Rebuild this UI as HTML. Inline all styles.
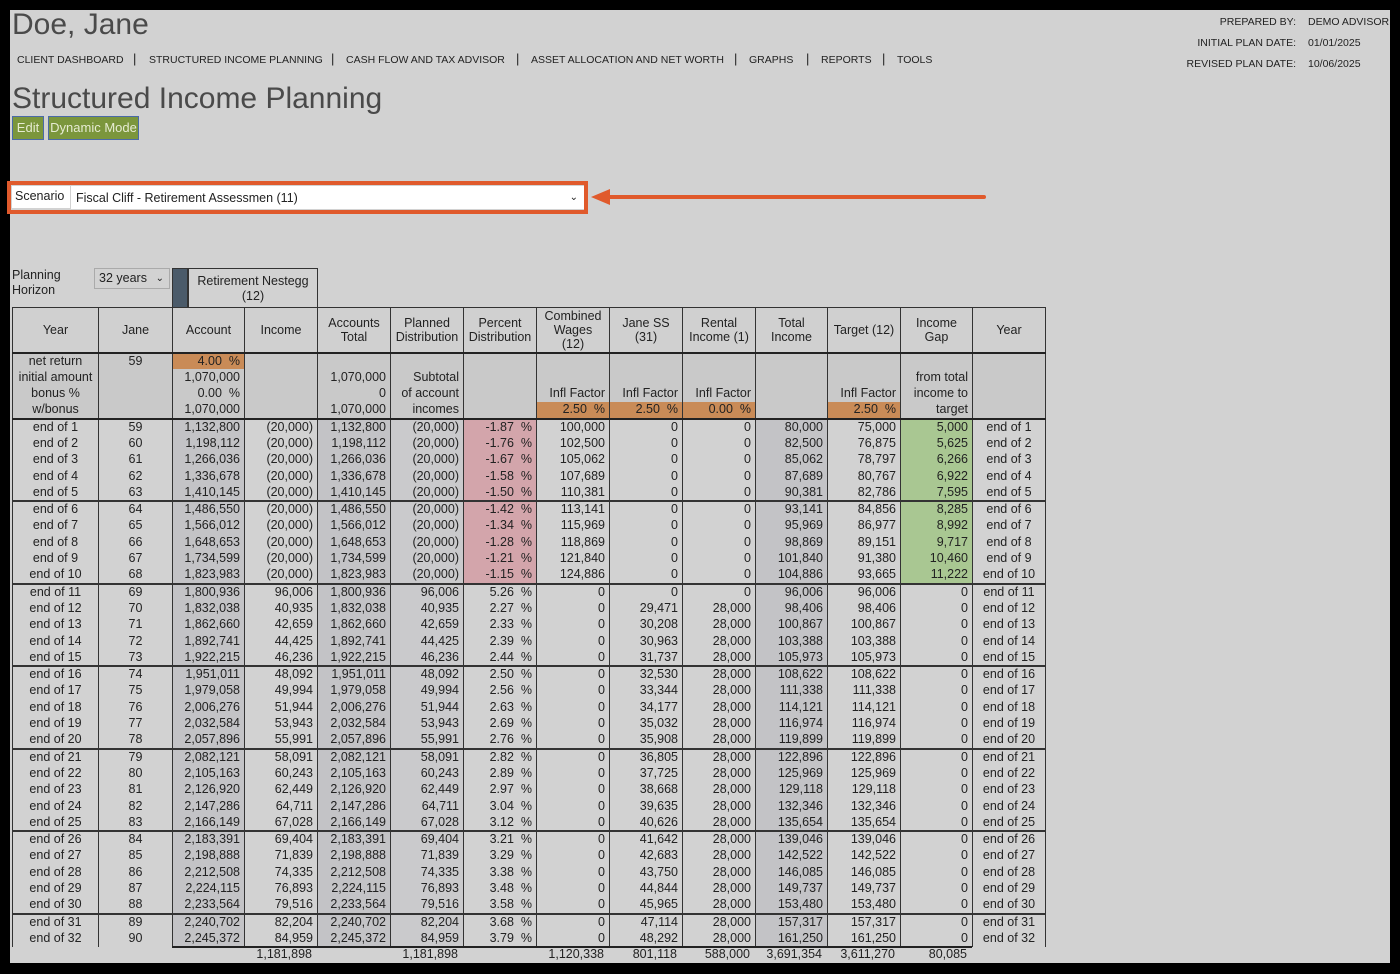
<!DOCTYPE html>
<html><head><meta charset="utf-8"><style>
*{margin:0;padding:0;box-sizing:border-box}
body{width:1400px;height:974px;background:#000;position:relative;overflow:hidden;font-family:"Liberation Sans",sans-serif;color:#222}
#pg{position:absolute;left:10px;top:10px;width:1380px;height:953px;background:#d2d2d2}
.a{position:absolute;white-space:nowrap}
.nav{font-size:10.5px;color:#222;top:54px}
.sep{font-size:13px;top:51px;color:#222}
.r{font-size:10.5px;color:#222}
.btn{position:absolute;top:116px;height:24px;background:#7b963c;border:1px solid #4a6aa8;color:#e6ebd2;font-size:13px;line-height:22px;text-align:center}
table{position:absolute;left:12px;top:307px;border-collapse:collapse;table-layout:fixed;font-size:12.5px}
td{border-left:1px solid #333;border-right:1px solid #333;padding:0 4px;text-align:right;height:16.5px;line-height:15px;white-space:nowrap;overflow:hidden}
td:first-child,td:nth-child(2),td:last-child{text-align:center}
tr.h td{height:45px;text-align:center;border:1px solid #333;border-bottom:2px solid #222;line-height:14px;background:#d0d0d0}
tr.t td{background:#c9c9c9}
tr.tb td{border-bottom:2px solid #222}
tr.g td{border-top:2px solid #333}
td.s{background:#c3c3c6}
td.s2{background:#cacacc}
td.o{background:#c98b57!important}
td.p{background:#d3a5ab}
td.gr{background:#a9c792}
</style></head><body><div id="pg"></div>
<div class="a" style="left:12px;top:8px;font-size:30px;color:#4a4a4a">Doe, Jane</div>
<div class="a nav" style="left:17px">CLIENT DASHBOARD</div><div class="a sep" style="left:133px">|</div>
<div class="a nav" style="left:149px">STRUCTURED INCOME PLANNING</div><div class="a sep" style="left:331px">|</div>
<div class="a nav" style="left:346px">CASH FLOW AND TAX ADVISOR</div><div class="a sep" style="left:516px">|</div>
<div class="a nav" style="left:531px">ASSET ALLOCATION AND NET WORTH</div><div class="a sep" style="left:734px">|</div>
<div class="a nav" style="left:749px">GRAPHS</div><div class="a sep" style="left:806px">|</div>
<div class="a nav" style="left:821px">REPORTS</div><div class="a sep" style="left:882px">|</div>
<div class="a nav" style="left:897px">TOOLS</div>
<div class="a r" style="right:104px;top:16px;text-align:right">PREPARED BY:</div><div class="a r" style="left:1308px;top:16px">DEMO ADVISOR</div>
<div class="a r" style="right:104px;top:37px;text-align:right">INITIAL PLAN DATE:</div><div class="a r" style="left:1308px;top:37px">01/01/2025</div>
<div class="a r" style="right:104px;top:58px;text-align:right">REVISED PLAN DATE:</div><div class="a r" style="left:1308px;top:58px">10/06/2025</div>
<div class="a" style="left:12px;top:82px;font-size:30px;color:#4a4a4a">Structured Income Planning</div>
<div class="btn" style="left:12px;width:32px">Edit</div>
<div class="btn" style="left:48px;width:91px">Dynamic Mode</div>
<div class="a" style="left:7px;top:181px;width:581px;height:33px;border:4px solid #e05a2c"></div>
<div class="a" style="left:12px;top:186px;width:58px;height:22px;background:#fff;font-size:12.5px;line-height:20px;padding-left:3px">Scenario</div>
<div class="a" style="left:71px;top:186px;width:513px;height:23px;background:#fff;font-size:12.5px;line-height:24px;padding-left:5px">Fiscal Cliff - Retirement Assessmen (11)<span style="position:absolute;right:6px;top:0;font-size:10px">&#8964;</span></div>
<svg class="a" style="left:588px;top:185px" width="402" height="26"><line x1="18" y1="12" x2="396" y2="12" stroke="#e05a2c" stroke-width="4" stroke-linecap="round"/><polygon points="3,12 22,4 22,20" fill="#e05a2c"/></svg>
<div class="a" style="left:12px;top:268px;font-size:12.5px;line-height:15px">Planning<br>Horizon</div>
<div class="a" style="left:94px;top:268px;width:76px;height:21px;border:1px solid #aaa;font-size:12.5px;line-height:19px;padding-left:4px">32 years<span style="position:absolute;right:5px;font-size:10px">&#8964;</span></div>
<div class="a" style="left:172px;top:268px;width:16px;height:40px;background:#4b5b6a;border:1px solid #333"></div>
<div class="a" style="left:188px;top:268px;width:130px;height:40px;border:1px solid #333;font-size:12.5px;line-height:15px;text-align:center;padding-top:5px">Retirement Nestegg<br>(12)</div>
<table>
<colgroup><col style="width:86px"><col style="width:74px"><col style="width:72px"><col style="width:73px"><col style="width:73px"><col style="width:73px"><col style="width:73px"><col style="width:73px"><col style="width:73px"><col style="width:73px"><col style="width:72px"><col style="width:73px"><col style="width:72px"><col style="width:73px"></colgroup>
<tr class="h"><td>Year<td>Jane<td>Account<td>Income<td>Accounts<br>Total<td>Planned<br>Distribution<td>Percent<br>Distribution<td>Combined<br>Wages<br>(12)<td>Jane SS<br>(31)<td>Rental<br>Income (1)<td>Total<br>Income<td>Target (12)<td>Income<br>Gap<td>Year</tr>
<tr class="t"><td>net return<td>59<td class="o">4.00 &nbsp;%<td><td><td><td><td><td><td><td><td><td><td></tr>
<tr class="t"><td>initial amount<td><td>1,070,000<td><td>1,070,000<td>Subtotal<td><td><td><td><td><td><td>from total<td></tr>
<tr class="t"><td>bonus %<td><td>0.00 &nbsp;%<td><td>0<td>of account<td><td>Infl Factor<td>Infl Factor<td>Infl Factor<td><td>Infl Factor<td>income to<td></tr>
<tr class="t tb"><td>w/bonus<td><td>1,070,000<td><td>1,070,000<td>incomes<td><td class="o">2.50 &nbsp;%<td class="o">2.50 &nbsp;%<td class="o">0.00 &nbsp;%<td><td class="o">2.50 &nbsp;%<td>target<td></tr>
<tr><td>end of 1<td>59<td class=s>1,132,800<td>(20,000)<td class=s>1,132,800<td class=s2>(20,000)<td class=p>-1.87 &nbsp;%<td>100,000<td>0<td>0<td class=s>80,000<td>75,000<td class=gr>5,000<td>end of 1</tr>
<tr><td>end of 2<td>60<td class=s>1,198,112<td>(20,000)<td class=s>1,198,112<td class=s2>(20,000)<td class=p>-1.76 &nbsp;%<td>102,500<td>0<td>0<td class=s>82,500<td>76,875<td class=gr>5,625<td>end of 2</tr>
<tr><td>end of 3<td>61<td class=s>1,266,036<td>(20,000)<td class=s>1,266,036<td class=s2>(20,000)<td class=p>-1.67 &nbsp;%<td>105,062<td>0<td>0<td class=s>85,062<td>78,797<td class=gr>6,266<td>end of 3</tr>
<tr><td>end of 4<td>62<td class=s>1,336,678<td>(20,000)<td class=s>1,336,678<td class=s2>(20,000)<td class=p>-1.58 &nbsp;%<td>107,689<td>0<td>0<td class=s>87,689<td>80,767<td class=gr>6,922<td>end of 4</tr>
<tr><td>end of 5<td>63<td class=s>1,410,145<td>(20,000)<td class=s>1,410,145<td class=s2>(20,000)<td class=p>-1.50 &nbsp;%<td>110,381<td>0<td>0<td class=s>90,381<td>82,786<td class=gr>7,595<td>end of 5</tr>
<tr class=g><td>end of 6<td>64<td class=s>1,486,550<td>(20,000)<td class=s>1,486,550<td class=s2>(20,000)<td class=p>-1.42 &nbsp;%<td>113,141<td>0<td>0<td class=s>93,141<td>84,856<td class=gr>8,285<td>end of 6</tr>
<tr><td>end of 7<td>65<td class=s>1,566,012<td>(20,000)<td class=s>1,566,012<td class=s2>(20,000)<td class=p>-1.34 &nbsp;%<td>115,969<td>0<td>0<td class=s>95,969<td>86,977<td class=gr>8,992<td>end of 7</tr>
<tr><td>end of 8<td>66<td class=s>1,648,653<td>(20,000)<td class=s>1,648,653<td class=s2>(20,000)<td class=p>-1.28 &nbsp;%<td>118,869<td>0<td>0<td class=s>98,869<td>89,151<td class=gr>9,717<td>end of 8</tr>
<tr><td>end of 9<td>67<td class=s>1,734,599<td>(20,000)<td class=s>1,734,599<td class=s2>(20,000)<td class=p>-1.21 &nbsp;%<td>121,840<td>0<td>0<td class=s>101,840<td>91,380<td class=gr>10,460<td>end of 9</tr>
<tr><td>end of 10<td>68<td class=s>1,823,983<td>(20,000)<td class=s>1,823,983<td class=s2>(20,000)<td class=p>-1.15 &nbsp;%<td>124,886<td>0<td>0<td class=s>104,886<td>93,665<td class=gr>11,222<td>end of 10</tr>
<tr class=g><td>end of 11<td>69<td class=s>1,800,936<td>96,006<td class=s>1,800,936<td class=s2>96,006<td>5.26 &nbsp;%<td>0<td>0<td>0<td class=s>96,006<td>96,006<td>0<td>end of 11</tr>
<tr><td>end of 12<td>70<td class=s>1,832,038<td>40,935<td class=s>1,832,038<td class=s2>40,935<td>2.27 &nbsp;%<td>0<td>29,471<td>28,000<td class=s>98,406<td>98,406<td>0<td>end of 12</tr>
<tr><td>end of 13<td>71<td class=s>1,862,660<td>42,659<td class=s>1,862,660<td class=s2>42,659<td>2.33 &nbsp;%<td>0<td>30,208<td>28,000<td class=s>100,867<td>100,867<td>0<td>end of 13</tr>
<tr><td>end of 14<td>72<td class=s>1,892,741<td>44,425<td class=s>1,892,741<td class=s2>44,425<td>2.39 &nbsp;%<td>0<td>30,963<td>28,000<td class=s>103,388<td>103,388<td>0<td>end of 14</tr>
<tr><td>end of 15<td>73<td class=s>1,922,215<td>46,236<td class=s>1,922,215<td class=s2>46,236<td>2.44 &nbsp;%<td>0<td>31,737<td>28,000<td class=s>105,973<td>105,973<td>0<td>end of 15</tr>
<tr class=g><td>end of 16<td>74<td class=s>1,951,011<td>48,092<td class=s>1,951,011<td class=s2>48,092<td>2.50 &nbsp;%<td>0<td>32,530<td>28,000<td class=s>108,622<td>108,622<td>0<td>end of 16</tr>
<tr><td>end of 17<td>75<td class=s>1,979,058<td>49,994<td class=s>1,979,058<td class=s2>49,994<td>2.56 &nbsp;%<td>0<td>33,344<td>28,000<td class=s>111,338<td>111,338<td>0<td>end of 17</tr>
<tr><td>end of 18<td>76<td class=s>2,006,276<td>51,944<td class=s>2,006,276<td class=s2>51,944<td>2.63 &nbsp;%<td>0<td>34,177<td>28,000<td class=s>114,121<td>114,121<td>0<td>end of 18</tr>
<tr><td>end of 19<td>77<td class=s>2,032,584<td>53,943<td class=s>2,032,584<td class=s2>53,943<td>2.69 &nbsp;%<td>0<td>35,032<td>28,000<td class=s>116,974<td>116,974<td>0<td>end of 19</tr>
<tr><td>end of 20<td>78<td class=s>2,057,896<td>55,991<td class=s>2,057,896<td class=s2>55,991<td>2.76 &nbsp;%<td>0<td>35,908<td>28,000<td class=s>119,899<td>119,899<td>0<td>end of 20</tr>
<tr class=g><td>end of 21<td>79<td class=s>2,082,121<td>58,091<td class=s>2,082,121<td class=s2>58,091<td>2.82 &nbsp;%<td>0<td>36,805<td>28,000<td class=s>122,896<td>122,896<td>0<td>end of 21</tr>
<tr><td>end of 22<td>80<td class=s>2,105,163<td>60,243<td class=s>2,105,163<td class=s2>60,243<td>2.89 &nbsp;%<td>0<td>37,725<td>28,000<td class=s>125,969<td>125,969<td>0<td>end of 22</tr>
<tr><td>end of 23<td>81<td class=s>2,126,920<td>62,449<td class=s>2,126,920<td class=s2>62,449<td>2.97 &nbsp;%<td>0<td>38,668<td>28,000<td class=s>129,118<td>129,118<td>0<td>end of 23</tr>
<tr><td>end of 24<td>82<td class=s>2,147,286<td>64,711<td class=s>2,147,286<td class=s2>64,711<td>3.04 &nbsp;%<td>0<td>39,635<td>28,000<td class=s>132,346<td>132,346<td>0<td>end of 24</tr>
<tr><td>end of 25<td>83<td class=s>2,166,149<td>67,028<td class=s>2,166,149<td class=s2>67,028<td>3.12 &nbsp;%<td>0<td>40,626<td>28,000<td class=s>135,654<td>135,654<td>0<td>end of 25</tr>
<tr class=g><td>end of 26<td>84<td class=s>2,183,391<td>69,404<td class=s>2,183,391<td class=s2>69,404<td>3.21 &nbsp;%<td>0<td>41,642<td>28,000<td class=s>139,046<td>139,046<td>0<td>end of 26</tr>
<tr><td>end of 27<td>85<td class=s>2,198,888<td>71,839<td class=s>2,198,888<td class=s2>71,839<td>3.29 &nbsp;%<td>0<td>42,683<td>28,000<td class=s>142,522<td>142,522<td>0<td>end of 27</tr>
<tr><td>end of 28<td>86<td class=s>2,212,508<td>74,335<td class=s>2,212,508<td class=s2>74,335<td>3.38 &nbsp;%<td>0<td>43,750<td>28,000<td class=s>146,085<td>146,085<td>0<td>end of 28</tr>
<tr><td>end of 29<td>87<td class=s>2,224,115<td>76,893<td class=s>2,224,115<td class=s2>76,893<td>3.48 &nbsp;%<td>0<td>44,844<td>28,000<td class=s>149,737<td>149,737<td>0<td>end of 29</tr>
<tr><td>end of 30<td>88<td class=s>2,233,564<td>79,516<td class=s>2,233,564<td class=s2>79,516<td>3.58 &nbsp;%<td>0<td>45,965<td>28,000<td class=s>153,480<td>153,480<td>0<td>end of 30</tr>
<tr class=g><td>end of 31<td>89<td class=s>2,240,702<td>82,204<td class=s>2,240,702<td class=s2>82,204<td>3.68 &nbsp;%<td>0<td>47,114<td>28,000<td class=s>157,317<td>157,317<td>0<td>end of 31</tr>
<tr><td>end of 32<td>90<td class=s>2,245,372<td>84,959<td class=s>2,245,372<td class=s2>84,959<td>3.79 &nbsp;%<td>0<td>48,292<td>28,000<td class=s>161,250<td>161,250<td>0<td>end of 32</tr>
</table>
<div class="a" style="left:172px;top:946px;width:800px;height:2px;background:#222"></div>
<div class="a" style="left:10px;top:963px;width:1380px;height:11px;background:#000"></div>
<div style="position:absolute;left:0;top:947px;width:1400px;height:16px;font-size:12.5px;line-height:15px">
<span class="a" style="right:1088px">1,181,898</span>
<span class="a" style="right:942px">1,181,898</span>
<span class="a" style="right:796px">1,120,338</span>
<span class="a" style="right:723px">801,118</span>
<span class="a" style="right:650px">588,000</span>
<span class="a" style="right:578px">3,691,354</span>
<span class="a" style="right:505px">3,611,270</span>
<span class="a" style="right:433px">80,085</span>
</div>
</body></html>
